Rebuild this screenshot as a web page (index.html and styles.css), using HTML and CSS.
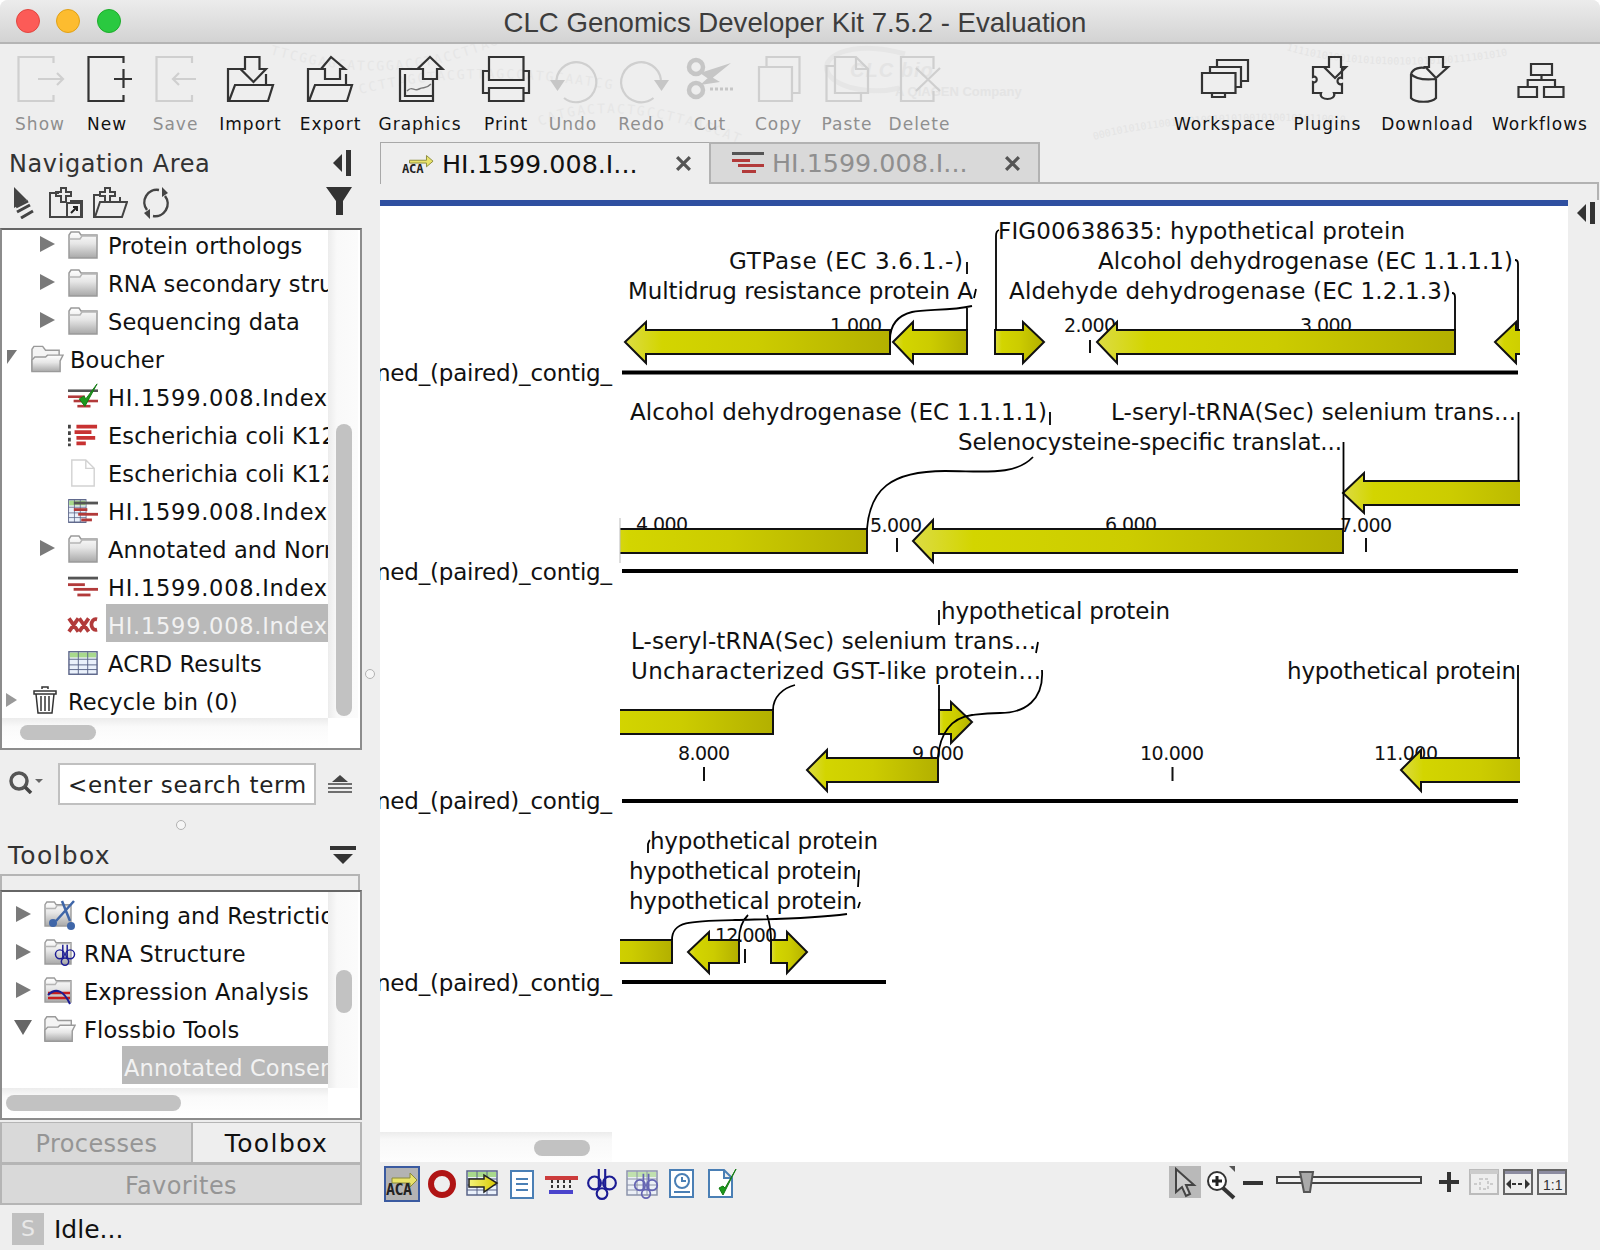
FILE: index.html
```html
<!DOCTYPE html>
<html lang="en">
<head>
<meta charset="utf-8">
<title>CLC Genomics Developer Kit 7.5.2 - Evaluation</title>
<link rel="stylesheet" href="styles.css">
</head>
<body>
<svg class="defs" aria-hidden="true">
  <defs>
    <linearGradient id="cds" x1="0" y1="0" x2="1" y2="0">
      <stop offset="0" stop-color="#dcdc44"/><stop offset=".14" stop-color="#d3d500"/><stop offset=".5" stop-color="#cccc00"/><stop offset="1" stop-color="#b3b000"/>
    </linearGradient>
    <linearGradient id="fold" x1="0" y1="0" x2="0" y2="1">
      <stop offset="0" stop-color="#ffffff"/><stop offset=".45" stop-color="#e6e6e6"/><stop offset="1" stop-color="#a8a8a8"/>
    </linearGradient>
    <linearGradient id="arr" x1="0" y1="0" x2="1" y2="0">
      <stop offset="0" stop-color="#f4f47a"/><stop offset="1" stop-color="#d9c800"/>
    </linearGradient>
    <symbol id="folder" viewBox="0 0 30 28">
      <path d="M1 27V4l2-3h8l2 3h16v23z" fill="url(#fold)" stroke="#9a9a9a" stroke-width="1.5"/>
      <path d="M1 8h11l2-3h15" fill="none" stroke="#b5b5b5" stroke-width="1.5"/>
    </symbol>
    <symbol id="folder-open" viewBox="0 0 34 28">
      <path d="M1 27V4l2-3h9l3 4h14v6" fill="#f4f4f4" stroke="#9a9a9a" stroke-width="1.5"/>
      <path d="M1 27V15l3-3h11l2-2h16l-3 6v11z" fill="url(#fold)" stroke="#9a9a9a" stroke-width="1.5"/>
    </symbol>
    <symbol id="red-lines" viewBox="0 0 32 24" preserveAspectRatio="none">
      <rect x="0" y="1" width="32" height="3" fill="#555"/>
      <rect x="0" y="8" width="18" height="3" fill="#b23a3a"/>
      <rect x="6" y="13" width="26" height="3" fill="#b23a3a"/>
      <rect x="10" y="19" width="14" height="3" fill="#b23a3a"/>
    </symbol>
    <symbol id="table" viewBox="0 0 32 26" preserveAspectRatio="none">
      <rect x="1" y="1" width="30" height="24" fill="#eaf1fb" stroke="#5a6488" stroke-width="1.5"/>
      <rect x="2" y="2" width="28" height="5" fill="#a8d98c"/>
      <path d="M1 9h30M1 15h30M1 20h30M11 1v24M21 1v24" stroke="#5a6488" stroke-width="1" fill="none"/>
    </symbol>
    <symbol id="rna" viewBox="0 0 30 30">
      <g fill="none" stroke="#1c1c94" stroke-width="2">
        <circle cx="8" cy="14" r="6"/><circle cx="22" cy="14" r="6"/><circle cx="15" cy="24" r="5"/>
        <path d="M12 1v18M18 1v18"/>
      </g>
    </symbol>
  </defs>
</svg>

<div class="window">
  <header class="titlebar">
    <div class="lights"><i class="light red"></i><i class="light amber"></i><i class="light green"></i></div>
    <h1 class="title">CLC Genomics Developer Kit 7.5.2 - Evaluation</h1>
  </header>

  <nav class="toolbar">
    <svg class="watermark" viewBox="0 0 1600 98" aria-hidden="true">
      <defs>
        <path id="wm1" d="M270 10 C 340 30, 420 40, 520 -10"/>
        <path id="wm2" d="M360 50 C 440 30, 520 30, 610 45"/>
        <path id="wm3" d="M540 82 C 590 60, 660 66, 740 100"/>
        <path id="wm4" d="M1286 6 C 1350 26, 1470 26, 1545 2"/>
        <path id="wm5" d="M1094 96 C 1180 72, 1330 70, 1480 94"/>
      </defs>
      <text class="wm-dna"><textPath href="#wm1">TTCGGAGCATCGGACGTACCTTAGGCTAACGGT</textPath></text>
      <text class="wm-dna"><textPath href="#wm2">CCTTAGCTACGTTAGCCATGCAATCGGATTC</textPath></text>
      <text class="wm-dna"><textPath href="#wm3">CATGACTACTGCCTTAAGCATCGA</textPath></text>
      <text class="wm-bin"><textPath href="#wm4">1111010100101010100101010100111101010</textPath></text>
      <text class="wm-bin"><textPath href="#wm5">000101010110010101001010100101001010110010</textPath></text>
      <path d="M905 10 C 850 -6, 815 14, 830 32 C 842 46, 875 50, 900 44" class="wm-swoosh"/>
      <text x="850" y="33" class="wm-logo">CLC bio</text>
      <text x="895" y="52" class="wm-sub">A QIAGEN Company</text>
    </svg>
    <div class="tool-group">
      <div class="tool off"><svg class="tool-ic" viewBox="0 0 48 48"><path d="M37.500 8V2H2.500V46H37.500V40M22 24H47M41 18l6 6-6 6"/></svg><span>Show</span></div>
      <div class="tool g7"><svg class="tool-ic" viewBox="0 0 48 48"><path d="M40.500 8V2H5.500V46H40.500V40M31 24H49M40.500 14V33"/></svg><span>New</span></div>
      <div class="tool off g8"><svg class="tool-ic" viewBox="0 0 48 48"><path d="M40 8V2H4.500V46H40V40M21 24H44M27 18l-6 6 6 6"/></svg><span>Save</span></div>
      <div class="tool g15"><svg class="tool-ic" viewBox="0 0 48 48"><path d="M13 14H1V46H41L46 30H8L2 46M39 19V30M18 2H32.500V14H39L26.500 27 13.500 14H18Z"/></svg><span>Import</span></div>
      <div class="tool g20"><svg class="tool-ic" viewBox="0 0 48 48"><path d="M13 14H1V46H40L45 30H8L2 46M39 19V30M24 2L38 14H33V24H18V14H14Z"/></svg><span>Export</span></div>
      <div class="tool g30"><svg class="tool-ic" viewBox="0 0 48 48"><path d="M21 14H4V46H37V25M9 19V41H37M34 2L46.500 14H41V24H27V14H21.500Z"/><path class="thin" d="M11 36c5-6 7 1 12-2s6 1 12-5"/></svg><span>Graphics</span></div>
      <div class="tool g26"><svg class="tool-ic" viewBox="0 0 48 48"><path d="M7 2H41.500V25H7ZM7 16H1V38H7M41.500 16H47V38H41.500M7 33H41.500V46H7Z"/></svg><span>Print</span></div>
      <div class="tool off g7"><svg class="tool-ic" viewBox="0 0 48 48"><path d="M7.400 25A20 20 0 1 1 15 43"/><path class="solid" d="M1 25H16L8.500 36Z"/></svg><span>Undo</span></div>
      <div class="tool off g8"><svg class="tool-ic" viewBox="0 0 48 48"><path d="M43 25A20 20 0 1 0 35.500 43"/><path class="solid" d="M36 25H51L43.500 36Z"/></svg><span>Redo</span></div>
      <div class="tool off g8"><svg class="tool-ic" viewBox="0 0 48 48"><circle class="heavy" cx="10" cy="12" r="7"/><circle class="heavy" cx="10" cy="35" r="7"/><path class="solid" d="M14 18L45 8 24 25ZM14 30L24 21 34 27Z"/><path class="dots" d="M24 34H48"/></svg><span>Cut</span></div>
      <div class="tool off g8"><svg class="tool-ic" viewBox="0 0 48 48"><path d="M4 12H37V46H4ZM11.500 12V2H44.500V38H37"/></svg><span>Copy</span></div>
      <div class="tool off g8"><svg class="tool-ic" viewBox="0 0 48 48"><path d="M12 11H3.500V46H38V38M12 38V2H33L45 14V38ZM33 2V14H45"/></svg><span>Paste</span></div>
      <div class="tool off g12"><svg class="tool-ic" viewBox="0 0 48 48"><path d="M37.500 14V2H5V46H37.500V36M20 13L44 36M44 13L20 36"/></svg><span>Delete</span></div>
    </div>
    <div class="tool-group tool-right">
      <div class="tool"><svg class="tool-ic" viewBox="0 0 48 48"><path d="M1 18H34.500V38H1ZM11 38V42H24V38M9 18V12H40V32H34.500M16 12V5H47V26H40"/></svg><span>Workspace</span></div>
      <div class="tool g40"><svg class="tool-ic" viewBox="0 0 48 48"><path d="M22 12H9V22c5-2 5 7 0 5V38H17c-3 8 16 8 13 0H38V29c-6 2-6-8 0-6V12H38"/><path d="M25 2H37V12H42L31 23 20 12H25Z"/></svg><span>Plugins</span></div>
      <div class="tool g52"><svg class="tool-ic" viewBox="0 0 48 48"><path d="M7 19V43c4 5 21 5 25 0V24M7 19c2-6 10-7 14-6M7 19c4 5 14 6 25 5"/><path d="M25 2H39V12H44L32 23 21.500 12H25Z"/></svg><span>Download</span></div>
      <div class="tool g42"><svg class="tool-ic" viewBox="0 0 48 48"><path d="M15 9H36V20H15ZM2.500 32H21V42H2.500ZM28 32H47.500V42H28ZM25.500 20V25M11.700 32V25H39V32"/></svg><span>Workflows</span></div>
    </div>
  </nav>

  <div class="workspace">
    <aside class="sidebar">
      <div class="pane-head nav-head">
        <span>Navigation Area</span>
        <svg class="head-ic" viewBox="0 0 20 26"><path d="M1 13L10 4V22Z" fill="#333"/><rect x="14" y="0" width="5" height="26" fill="#333"/></svg>
      </div>
      <div class="nav-icons">
        <svg class="nav-ic" viewBox="0 0 24 32"><path d="M2 0L15 13 2 21Z" fill="#444"/><path d="M4 20l12-6M5 25l13-7M9 31l12-7" stroke="#444" stroke-width="3" fill="none"/></svg>
        <svg class="nav-ic wide" viewBox="0 0 36 32"><path d="M11 6H2V30H34V14H22M8 5h5V1h5v4h5v4h-5v6h-5V9H8Z" fill="none" stroke="#444" stroke-width="2"/><rect x="19" y="16" width="14" height="14" fill="#eee" stroke="#444" stroke-width="2"/><path d="M23 26l6-6M25 20h4v4" stroke="#222" stroke-width="2" fill="none"/></svg>
        <svg class="nav-ic wide" viewBox="0 0 36 32"><path d="M8 8H2V30H30L35 15H8L3 30M28 10V15M8 5h5V1h5v4h5v4h-5v6h-5V9H8Z" fill="none" stroke="#444" stroke-width="2"/></svg>
        <svg class="nav-ic wide" viewBox="0 0 36 32"><path d="M9 23A12.500 12.500 0 0 1 21 3M27 9A12.500 12.500 0 0 1 15 29" fill="none" stroke="#444" stroke-width="2.500"/><path d="M24 0l6 6-6 4ZM12 32l-6-6 6-4Z" fill="#444"/></svg>
        <svg class="funnel" viewBox="0 0 26 28"><path d="M0 0H26L17 14V28H10V14Z" fill="#333"/></svg>
      </div>

      <div class="tree tree-nav">
        <div class="tree-view">
          <ul class="rows">
            <li class="row lv1"><i class="caret"></i><svg class="ri"><use href="#folder"/></svg><span>Protein orthologs</span></li>
            <li class="row lv1"><i class="caret"></i><svg class="ri"><use href="#folder"/></svg><span>RNA secondary structures</span></li>
            <li class="row lv1"><i class="caret"></i><svg class="ri"><use href="#folder"/></svg><span>Sequencing data</span></li>
            <li class="row lv0"><i class="caret diag"></i><svg class="ri ri-open"><use href="#folder-open"/></svg><span>Boucher</span></li>
            <li class="row lv1 leaf"><svg class="ri" viewBox="0 0 32 28"><use href="#red-lines" y="5" width="32" height="22"/><path d="M12 16l6 8L31 0 19 16l-2-3z" fill="#1c9a1c" stroke="#137a13"/></svg><span class="hi">HI.1599.008.IndexAndReads</span></li>
            <li class="row lv1 leaf"><svg class="ri" viewBox="0 0 32 26"><path d="M0 2h3v4H0zM0 9h3v4H0zM0 16h3v4H0zM0 22h3v3H0z" fill="#444"/><path d="M9 2h22v4H9zM7 8h18v4H7zM9 14h20v4H9zM9 20h10v4H9z" fill="#c83232"/></svg><span>Escherichia coli K12 substr.</span></li>
            <li class="row lv1 leaf"><svg class="ri" viewBox="0 0 32 30"><path d="M4 1H19L28 10V29H4ZM19 1V10H28" fill="#fff" stroke="#d2d2d2" stroke-width="1.500"/></svg><span>Escherichia coli K12 substr.</span></li>
            <li class="row lv1 leaf"><svg class="ri" viewBox="0 0 32 26"><use href="#table" width="20" height="26"/><use href="#red-lines" x="6" y="2" width="26" height="24"/></svg><span class="hi">HI.1599.008.IndexAndReads</span></li>
            <li class="row lv1"><i class="caret"></i><svg class="ri"><use href="#folder"/></svg><span>Annotated and Normalized</span></li>
            <li class="row lv1 leaf"><svg class="ri" viewBox="0 0 32 24"><use href="#red-lines" width="32" height="24"/></svg><span class="hi">HI.1599.008.IndexAndReads</span></li>
            <li class="row lv1 leaf sel"><svg class="ri" viewBox="0 0 32 24"><path d="M1 5l10 14M11 5L1 19M12 5l10 14M22 5L12 19M31 6c-8-2-8 13 0 11" fill="none" stroke="#b23a3a" stroke-width="4"/></svg><span class="hi">HI.1599.008.IndexAndReads</span></li>
            <li class="row lv1 leaf"><svg class="ri" viewBox="0 0 32 26"><use href="#table" width="32" height="26"/></svg><span>ACRD Results</span></li>
            <li class="row lv0"><i class="caret tiny"></i><svg class="ri ri-bin" viewBox="0 0 24 28"><path d="M9 3V1h6v2M1 5h22v3H1zM3 8l2 19h14l2-19" fill="#fff" stroke="#333" stroke-width="1.500"/><path d="M8 10v15M12 10v15M16 10v15" stroke="#333" stroke-width="1.500"/></svg><span>Recycle bin (0)</span></li>
          </ul>
        </div>
        <div class="vtrack"><i class="thumb v-nav"></i></div>
        <div class="htrack"><i class="thumb h-nav"></i></div>
        <div class="corner"></div>
      </div>

      <div class="search">
        <svg class="search-ic" viewBox="0 0 36 23"><circle cx="11" cy="10" r="8" fill="none" stroke="#555" stroke-width="3.500"/><path d="M17 16l6 6" stroke="#444" stroke-width="3.500"/><path d="M27 8h8l-4 4z" fill="#666"/></svg>
        <div class="search-box">&lt;enter search term</div>
        <svg class="eject" viewBox="0 0 24 18"><path d="M4 7L12 0 20 7Z" fill="#444"/><path d="M0 9H24M0 13H24M0 17H24" stroke="#444" stroke-width="1.500"/></svg>
      </div>
      <div class="pane-head tool-head">
        <span>Toolbox</span>
        <svg class="menu-ic" viewBox="0 0 26 18"><rect width="26" height="4" fill="#333"/><path d="M3 8H23L13 18Z" fill="#333"/></svg>
      </div>
      <div class="strip"></div>
      <div class="tree tree-tools">
        <div class="tree-view">
          <ul class="rows">
            <li class="row lvt"><i class="caret"></i><svg class="ri" viewBox="0 0 32 32"><use href="#folder" y="2" width="28" height="26"/><path d="M30 2L12 22M18 2l8 20" stroke="#3f66a8" stroke-width="2.500" fill="none"/><circle cx="9" cy="24" r="4" fill="#3f66a8"/><circle cx="27" cy="27" r="4" fill="#3f66a8"/></svg><span>Cloning and Restriction Sites</span></li>
            <li class="row lvt"><i class="caret"></i><svg class="ri" viewBox="0 0 32 32"><use href="#folder" y="2" width="28" height="26"/><use href="#rna" x="10" y="6" width="22" height="24"/></svg><span>RNA Structure</span></li>
            <li class="row lvt"><i class="caret"></i><svg class="ri" viewBox="0 0 32 32"><use href="#folder" y="2" width="28" height="26"/><path d="M4 18H26" stroke="#c81e1e" stroke-width="2.500"/><path d="M4 23H26" stroke="#c81e1e" stroke-width="2.500"/><path d="M4 20c8-8 16-4 22 9" stroke="#1c1c94" stroke-width="2" fill="none"/></svg><span>Expression Analysis</span></li>
            <li class="row lvt"><i class="caret down"></i><svg class="ri" viewBox="0 0 32 28"><use href="#folder-open" width="32" height="28"/></svg><span>Flossbio Tools</span></li>
            <li class="row lvs sel"><span>Annotated Consensus Read Mapper</span></li>
          </ul>
        </div>
        <div class="vtrack"><i class="thumb v-tools"></i></div>
        <div class="htrack"><i class="thumb h-tools"></i></div>
        <div class="corner"></div>
      </div>
      <div class="pane-tabs">
        <div class="ptab">Processes</div>
        <div class="ptab on">Toolbox</div>
        <div class="ptab full">Favorites</div>
      </div>
      <div class="status"><b class="status-s">S</b><span>Idle...</span></div>
      <i class="grip grip-v"></i>
      <i class="grip grip-h"></i>
    </aside>

    <main class="main">
      <div class="tabs">
        <div class="tab active">
          <svg class="tab-ic" viewBox="0 0 34 22"><path d="M8 7H26V2L33 8 26 14V10H8Z" fill="#e9e36a" stroke="#8a8a3a"/><text x="0" y="21" class="aca">ACA</text></svg>
          <span class="tab-t">HI.1599.008.I...</span>
          <svg class="tab-x" viewBox="0 0 16 14"><path d="M2 1L14 13M14 1L2 13"/></svg>
        </div>
        <div class="tab">
          <svg class="tab-ic" viewBox="0 0 32 24"><use href="#red-lines" width="32" height="24"/></svg>
          <span class="tab-t">HI.1599.008.I...</span>
          <svg class="tab-x" viewBox="0 0 16 14"><path d="M2 1L14 13M14 1L2 13"/></svg>
        </div>
        <div class="tab-rest"></div>
      </div>
      <div class="view-row">
        <div class="view">
          <svg class="map" viewBox="380 206 1188 956" role="img">
            <defs><clipPath id="clipRow"><rect x="620" y="206" width="900" height="956"/></clipPath></defs>

            <!-- sequence names -->
            <text class="lbl" x="376" y="381" textLength="236">ned_(paired)_contig_</text>
            <text class="lbl" x="376" y="580" textLength="236">ned_(paired)_contig_</text>
            <text class="lbl" x="376" y="809" textLength="236">ned_(paired)_contig_</text>
            <text class="lbl" x="376" y="991" textLength="236">ned_(paired)_contig_</text>

            <!-- rulers -->
            <path class="rule" d="M622 372.500H1518M622 571H1518M622 801H1518M622 982H886"/>
            <text class="num" x="830" y="332" textLength="52">1.000</text>
            <text class="num" x="1064" y="332" textLength="52">2.000</text>
            <text class="num" x="1300" y="332" textLength="52">3.000</text>
            <text class="num" x="636" y="531" textLength="52">4.000</text>
            <text class="num" x="870" y="532" textLength="52">5.000</text>
            <text class="num" x="1105" y="531" textLength="52">6.000</text>
            <text class="num" x="1340" y="532" textLength="52">7.000</text>
            <text class="num" x="678" y="760" textLength="52">8.000</text>
            <text class="num" x="912" y="760" textLength="52">9.000</text>
            <text class="num" x="1140" y="760" textLength="64">10.000</text>
            <text class="num" x="1374" y="760" textLength="64">11.000</text>
            <text class="num" x="715" y="942" textLength="62">12.000</text>
            <path class="tick" d="M1090 340V353M897 538V552M1366 538V552M704 767V781M1172.500 767V781M745 949V963"/>

            <!-- features -->
            <g clip-path="url(#clipRow)">
              <polygon class="cds" points="625,342 646,322 646,330 890,330 890,354 646,354 646,363"/>
              <polygon class="cds" points="893,342 913,322 913,330 967,330 967,354 913,354 913,363"/>
              <polygon class="cds" points="995,330 1023,330 1023,322 1044,342 1023,363 1023,354 995,354"/>
              <polygon class="cds" points="1097,342 1117,322 1117,330 1455,330 1455,354 1117,354 1117,363"/>
              <polygon class="cds" points="1495,342 1516,322 1516,330 1560,330 1560,354 1516,354 1516,363"/>
              <polygon class="cds" points="1343,493 1364,473 1364,481 1560,481 1560,505 1364,505 1364,513"/>
              <polygon class="cds" points="590,529 867,529 867,553 590,553"/>
              <polygon class="cds" points="913,541 933,520 933,529 1343,529 1343,553 933,553 933,562"/>
              <polygon class="cds" points="590,710 773,710 773,734 590,734"/>
              <polygon class="cds" points="939,710 951,710 951,702 972,722 951,743 951,734 939,734"/>
              <polygon class="cds" points="807,770 827,750 827,758 938,758 938,782 827,782 827,791"/>
              <polygon class="cds" points="1401,770 1421,750 1421,758 1560,758 1560,782 1421,782 1421,791"/>
              <polygon class="cds" points="590,940 672,940 672,963 590,963"/>
              <polygon class="cds" points="688,952 709,932 709,940 739,940 739,963 709,963 709,973"/>
              <polygon class="cds" points="771,940 787,940 787,932 807,952 787,973 787,963 771,963"/>
            </g>
            <path class="clipedge" d="M620 518V563"/>

            <!-- leader lines -->
            <path class="lead" d="M967 262V274M967 307V330M972 306C950 311 925 309 912 312C896 316 890 326 890 340M976 289L974 298"/>
            <path class="lead" d="M996 330V236Q996 231 999 230M1455 330V297Q1455 293 1452 293M1518 330V264Q1518 260 1515 260"/>
            <path class="lead" d="M1050 412V425M1518.500 481V412M1343.500 529V442M1033 457C1015 476 985 471 945 471C890 471 870 490 867 529"/>
            <path class="lead" d="M939 610V625M1038 642L1036 653M939 685V710M795 685C783 688 773 697 773 710M1042 670C1044 700 1025 713 1000 713C985 713 980 714 972 715C950 718 940 735 938 757M1518 665V758"/>
            <path class="lead" d="M648 853V844Q649 841 650 840M859 870L858 887M860 902L858 908M847 914C810 919 770 919 735 920C690 921 672 921 672 940M748 915C742 921 739 930 739 940M767 915C769 921 771 930 771 940"/>

            <!-- labels -->
            <text class="lbl" x="998" y="239" textLength="407">FIG00638635: hypothetical protein</text>
            <text class="lbl" x="729" y="269" textLength="234">GTPase (EC 3.6.1.-)</text>
            <text class="lbl" x="1098" y="269" textLength="415">Alcohol dehydrogenase (EC 1.1.1.1)</text>
            <text class="lbl" x="628" y="299" textLength="345">Multidrug resistance protein A</text>
            <text class="lbl" x="1009" y="299" textLength="442">Aldehyde dehydrogenase (EC 1.2.1.3)</text>

            <text class="lbl" x="630" y="420" textLength="417">Alcohol dehydrogenase (EC 1.1.1.1)</text>
            <text class="lbl" x="1111" y="420" textLength="405">L-seryl-tRNA(Sec) selenium trans...</text>
            <text class="lbl" x="958" y="450" textLength="384">Selenocysteine-specific translat...</text>

            <text class="lbl" x="941" y="619" textLength="229">hypothetical protein</text>
            <text class="lbl" x="631" y="649" textLength="405">L-seryl-tRNA(Sec) selenium trans...</text>
            <text class="lbl" x="631" y="679" textLength="410">Uncharacterized GST-like protein...</text>
            <text class="lbl" x="1287" y="679" textLength="229">hypothetical protein</text>

            <text class="lbl" x="650" y="849" textLength="228">hypothetical protein</text>
            <text class="lbl" x="629" y="879" textLength="228">hypothetical protein</text>
            <text class="lbl" x="629" y="909" textLength="228">hypothetical protein</text>
          </svg>
          <div class="map-scroll"><i class="thumb h-map"></i></div>
        </div>
        <div class="view-side">
          <svg class="side-ic" viewBox="0 0 18 22"><path d="M0 11L9 2V20Z" fill="#333"/><rect x="13" y="0" width="5" height="22" fill="#333"/></svg>
        </div>
      </div>
      <div class="bottom">
        <div class="views">
          <svg class="vi vi-on" viewBox="0 0 40 40"><rect x="3" y="3" width="34" height="34" fill="#b3b3b3" stroke="#3a5aa0" stroke-width="2"/><path d="M10 14H28V9L35 16 28 23V19H10Z" fill="#e9e36a" stroke="#8a8a3a"/><text x="4" y="31" class="aca big">ACA</text></svg>
          <svg class="vi" viewBox="0 0 40 40"><circle cx="20" cy="20" r="11" fill="none" stroke="#b01414" stroke-width="6"/></svg>
          <svg class="vi" viewBox="0 0 40 40"><use href="#table" x="4" y="6" width="32" height="26"/><path d="M7 15H22V11L35 19 22 28V23H7Z" fill="url(#arr)" stroke="#222" stroke-width="1.500"/></svg>
          <svg class="vi" viewBox="0 0 40 40"><rect x="9" y="7" width="22" height="27" fill="#fff" stroke="#4a7fb5" stroke-width="2"/><path d="M14 15H26M14 20H26M14 26H26" stroke="#4a7fb5" stroke-width="2"/></svg>
          <svg class="vi" viewBox="0 0 40 40"><rect x="3" y="12" width="33" height="4" fill="#cc3b3b"/><rect x="7" y="26" width="24" height="4" fill="#4a44cc"/><path d="M10 16v10M16 16v10M22 16v10M28 16v10" stroke="#333" stroke-width="2" stroke-dasharray="3 2"/></svg>
          <svg class="vi" viewBox="0 0 40 40"><use href="#rna" x="4" y="4" width="32" height="32"/></svg>
          <svg class="vi vi-fade" viewBox="0 0 40 40"><use href="#table" x="4" y="6" width="32" height="26"/><use href="#rna" x="11" y="8" width="26" height="28"/></svg>
          <svg class="vi" viewBox="0 0 40 40"><rect x="8" y="6" width="23" height="27" fill="#fff" stroke="#4a7fb5" stroke-width="2"/><circle cx="20" cy="17" r="7" fill="none" stroke="#4a7fb5" stroke-width="2"/><path d="M20 13v4h4M12 28H28" stroke="#4a7fb5" stroke-width="2" fill="none"/></svg>
          <svg class="vi" viewBox="0 0 40 40"><path d="M7 6H22L30 14V33H7ZM22 6V14H30" fill="#fff" stroke="#4a7fb5" stroke-width="2"/><path d="M17 24l4 7L34 5 23 24l-2-2z" fill="#1c9a1c" stroke="#137a13"/></svg>
        </div>
        <div class="zooms">
          <svg class="zi pointer" viewBox="0 0 32 32"><path d="M7 3V26L13 21 17 30 21 28 17 19H25Z" fill="#ccc" stroke="#444" stroke-width="2"/></svg>
          <svg class="zi zoom-ic" viewBox="0 0 34 32"><circle cx="14" cy="15" r="9" fill="#fff" stroke="#333" stroke-width="2"/><path d="M9 15H19M14 10V20" stroke="#222" stroke-width="3"/><path d="M20 22L31 32" stroke="#333" stroke-width="4"/><path d="M26 0H32V6Z" fill="#555"/></svg>
          <svg class="zi minus" viewBox="0 0 24 32"><rect x="2" y="15" width="20" height="4" fill="#333"/></svg>
          <svg class="zi slider" viewBox="0 0 152 32"><rect x="4" y="11" width="144" height="6" fill="#f2f2f2" stroke="#444" stroke-width="2"/><path d="M27 6H40L37 26H31Z" fill="#aaa" stroke="#555" stroke-width="2"/></svg>
          <svg class="zi plus" viewBox="0 0 24 32"><path d="M2 16H22M12 6V26" stroke="#333" stroke-width="4"/></svg>
          <svg class="zi box off" viewBox="0 0 32 32"><rect x="2" y="4" width="28" height="24" fill="#eee" stroke="#bbb" stroke-width="2"/><rect x="2" y="4" width="28" height="4" fill="#ccc"/><path d="M6 18H10M22 18H26M12 13H20V23H12Z" stroke="#ccc" stroke-width="2" fill="none" stroke-dasharray="3 2"/></svg>
          <svg class="zi box" viewBox="0 0 32 32"><rect x="2" y="4" width="28" height="24" fill="#eee" stroke="#666" stroke-width="2"/><rect x="3" y="5" width="26" height="3" fill="#8c8ca0"/><path d="M4 18L9 13V23ZM28 18L23 13V23Z" fill="#333"/><path d="M10 18H22" stroke="#333" stroke-width="2" stroke-dasharray="4 2"/></svg>
          <svg class="zi box" viewBox="0 0 32 32"><rect x="2" y="4" width="28" height="24" fill="#eee" stroke="#666" stroke-width="2"/><rect x="3" y="5" width="26" height="3" fill="#8c8ca0"/><text x="7" y="24" class="ratio">1:1</text></svg>
        </div>
      </div>
    </main>
  </div>
</div>
</body>
</html>
```

FILE: styles.css
```css
* { box-sizing: border-box; }
html, body { margin: 0; padding: 0; background: #fff; }
body { font-family: "DejaVu Sans", sans-serif; color: #111; }
.defs { position: absolute; width: 0; height: 0; }
ul { list-style: none; margin: 0; padding: 0; }

.window {
  width: 1600px; height: 1250px; background: #eeeeee;
  display: flex; flex-direction: column; overflow: hidden;
  border-radius: 8px 8px 0 0;
}

/* title bar */
.titlebar {
  height: 44px; flex: none; display: flex; align-items: center; position: relative;
  background: linear-gradient(#ececec, #d3d3d3);
  border-bottom: 2px solid #b4b4b4;
}
.lights { display: flex; gap: 16.5px; padding-left: 15.5px; }
.light { width: 24px; height: 24px; border-radius: 50%; display: block; }
.red { background: #fc5b57; border: 1px solid #e2463f; }
.amber { background: #fdbc2f; border: 1px solid #e1a116; }
.green { background: #2ac940; border: 1px solid #1dad2b; }
.title {
  position: absolute; left: 0; right: 10px; top: 1px; margin: 0; text-align: center;
  font: 400 27.6px/44px "Liberation Sans", sans-serif; color: #3d3d3d;
}

/* main toolbar */
.toolbar { height: 98px; flex: none; display: flex; justify-content: space-between; position: relative; padding: 11px 30px 0 10px; }
.watermark { position: absolute; left: 0; top: 0; width: 1600px; height: 98px; }
.wm-dna { font: 13px "DejaVu Sans Mono", monospace; fill: #e6e6e6; letter-spacing: 2px; }
.wm-bin { font: 10px "DejaVu Sans Mono", monospace; fill: #e4e4e4; letter-spacing: 0; }
.wm-swoosh { fill: none; stroke: #e6e6e6; stroke-width: 5; }
.wm-logo { font: italic 700 20px "Liberation Sans", sans-serif; fill: #e4e4e4; letter-spacing: 1px; }
.wm-sub { font: 700 13px "Liberation Sans", sans-serif; fill: #e4e4e4; }
.tool-group { display: flex; position: relative; }
.tool { width: 60px; display: flex; flex-direction: column; align-items: center; font-size: 17px; letter-spacing: 1px; line-height: 24px; color: #111; white-space: nowrap; }
.tool span { margin-top: 9px; flex: none; }
.tool-ic { width: 48px; height: 48px; flex: none; overflow: visible; fill: none; stroke: #333; stroke-width: 2.2; }
.tool-ic .thin { stroke: #777; stroke-width: 1.500; }
.off { color: #8f8f8f; }
.tool.off .tool-ic { stroke: #cfcfcf; }
.tool.off .solid { fill: #c6c6c6; stroke: none; }
.tool.off .heavy { stroke: #c6c6c6; stroke-width: 4.500; }
.tool.off .dots { stroke: #c6c6c6; stroke-width: 3; stroke-dasharray: 3 2; }
.g7 { margin-left: 7px; }
.g8 { margin-left: 8.5px; }
.g12 { margin-left: 12.5px; }
.g15 { margin-left: 15px; }
.g20 { margin-left: 20px; }
.g26 { margin-left: 26px; }
.g30 { margin-left: 29.5px; }
.g40 { margin-left: 42.5px; }
.g42 { margin-left: 52.5px; }
.g52 { margin-left: 40px; }

/* layout */
.workspace { flex: 1; display: flex; min-height: 0; }
.sidebar { width: 380px; flex: none; position: relative; padding-right: 18px; }
.main { flex: 1; display: flex; flex-direction: column; min-width: 0; }

/* sidebar heads */
.pane-head { display: flex; align-items: center; justify-content: space-between; font-size: 24px; letter-spacing: .6px; color: #333; white-space: nowrap; }
.nav-head { height: 42px; padding: 2px 10px 0 9px; }
.head-ic { width: 20px; height: 26px; margin-top: -2px; }
.nav-icons { height: 44px; display: flex; align-items: flex-start; padding: 3px 10px 0 12px; gap: 8px; }
.nav-ic { width: 24px; height: 32px; flex: none; }
.nav-ic:first-child { margin-right: 4px; }
.nav-ic:nth-child(4) { margin-left: 2px; }
.nav-ic.wide { width: 36px; }
.funnel { width: 26px; height: 28px; margin-left: auto; }

/* trees */
.tree {
  display: grid; grid-template-columns: 326px 1fr; grid-template-rows: 1fr 30px;
  background: #fff; border: 2px solid #8c8c8c; overflow: hidden;
}
.tree-nav { height: 522px; border-top-color: #666; }
.tree-tools { height: 230px; border-top-color: #666; }
.tree-view { overflow: hidden; min-height: 0; }
.tree-nav .rows { margin-top: -6px; }
.tree-tools .rows { margin-top: 2px; }
.row { height: 38px; display: flex; align-items: center; white-space: nowrap; font-size: 22.5px; letter-spacing: .15px; color: #111; }
.row span { padding-top: 5px; }
.row .hi { letter-spacing: .75px; }
.lv1 { padding-left: 38px; }
.lv1.leaf { padding-left: 66px; }
.lv0 { padding-left: 2px; }
.lvt { padding-left: 14px; }
.lvs { padding-left: 120px; }
.caret { display: block; flex: none; width: 0; height: 0; border-style: solid; border-width: 8px 0 8px 15px; border-color: transparent transparent transparent #7a7a7a; margin-right: 13px; margin-top: 1px; }
.caret.diag { border-width: 14px 10px 0 0; border-color: #777 transparent transparent transparent; margin: 0 14px 0 3px; }
.caret.tiny { border-width: 7px 0 7px 11px; border-color: transparent transparent transparent #999; margin-right: 13px; margin-left: 2px; }
.caret.down { border-width: 15px 9px 0 9px; border-color: #666 transparent transparent transparent; margin: 0 12px 0 -2px; }
.ri { width: 30px; height: 28px; flex: none; margin-right: 10px; margin-top: 3px; overflow: visible; }
.ri-open { width: 33px; margin-right: 6px; }
.lv0 .ri-bin { width: 24px; margin-left: 3px; margin-right: 11px; margin-top: 2px; }
.lvt .ri { width: 32px; height: 32px; margin-right: 8px; }
.row.sel { color: #f2f2f2; }
.row.sel span { background: #b9b9b9; height: 38px; line-height: 34px; padding: 5px 0 0 2px; flex: 1; min-width: 0; }
.lv1.sel .ri { margin-right: 8px; }
.vtrack { background: linear-gradient(90deg, #ececec, #f9f9f9 30%, #fbfbfb); position: relative; margin-right: 2px; }
.htrack { background: linear-gradient(#ececec, #fafafa 30%, #fff); position: relative; }
.corner { background: #fff; }
.thumb { display: block; position: absolute; background: #c2c2c2; border-radius: 8px; }
.v-nav { left: 8px; width: 16px; top: 194px; height: 292px; }
.h-nav { left: 18px; top: 7px; width: 76px; height: 15px; }
.v-tools { left: 8px; width: 16px; top: 78px; height: 43px; }
.h-tools { left: 4px; top: 7px; width: 175px; height: 16px; }

/* search */
.search { height: 66px; display: flex; align-items: flex-start; padding: 13px 10px 0 8px; }
.search-ic { width: 36px; height: 23px; margin-top: 8px; flex: none; }
.search-box { width: 258px; height: 42px; margin-left: 14px; border: 2px solid #c0c0c0; background: #fff; font-size: 23px; letter-spacing: .7px; line-height: 40px; padding-left: 8px; color: #222; white-space: nowrap; overflow: hidden; flex: none; }
.eject { width: 24px; height: 18px; margin: 12px 0 0 12px; flex: none; }
.tool-head { height: 58px; padding: 21px 6px 0 8px; font-size: 25px; letter-spacing: 1.3px; }
.menu-ic { width: 26px; height: 18px; margin-top: -2px; }
.strip { height: 16px; border: 2px solid #b5b5b5; border-bottom: 0; margin-right: 2px; }

/* bottom left tabs */
.pane-tabs { display: grid; grid-template-columns: 193px 1fr; margin-top: 2px; }
.ptab { height: 42px; background: #d9d9d9; border: 2px solid #b5b5b5; border-top-width: 1px; color: #959595; font-size: 24px; line-height: 42px; text-align: center; letter-spacing: .4px; }
.ptab.on { background: #eeeeee; color: #111; border-left: 0; font-size: 25px; letter-spacing: 1.4px; }
.ptab.full { grid-column: 1 / 3; height: 41px; }
.status { height: 46px; display: flex; align-items: center; padding: 2px 0 0 12px; font-size: 25px; color: #111; }
.status-s { width: 32px; height: 32px; background: #c0c0c0; color: #e8e8e8; text-align: center; font-weight: 400; font-size: 22px; line-height: 32px; margin-right: 10px; }
.grip { position: absolute; width: 10px; height: 10px; border-radius: 50%; background: #f6f6f6; border: 1px solid #b2b2b2; }
.grip-v { left: 365px; top: 527px; }
.grip-h { left: 176px; top: 678px; }

/* tabs */
.tabs { height: 42px; flex: none; display: flex; align-items: stretch; }
.tab { width: 331px; flex: none; display: flex; align-items: center; background: #d9d9d9; border: 2px solid #b2b2b2; color: #8f8f8f; font-size: 25.4px; padding-left: 21px; position: relative; }
.tab + .tab { margin-left: -2px; }
.tab.active { background: #eeeeee; color: #111; border-width: 1px 0 0 1px; border-color: #a8a8a8; }
.tab-ic { width: 32px; height: 24px; flex: none; margin-right: 8px; }
.tab-t { flex: 1; white-space: nowrap; }
.tab-x { width: 17px; height: 15px; flex: none; margin-right: 17px; fill: none; stroke: #555; stroke-width: 3; }
.tab.active .tab-x { margin-right: 19px; }
.tab-rest { flex: 1; border-bottom: 2px solid #b2b2b2; margin-right: 1px; }
.aca { font: 700 13px "DejaVu Sans Mono", monospace; fill: #222; letter-spacing: -.3px; }
.aca.big { font-size: 15px; letter-spacing: -.5px; }
.ratio { font: 400 14px "Liberation Sans", sans-serif; fill: #333; }

/* viewer */
.view-row { height: 978px; padding-top: 16px; display: flex; flex: none; }
.view { width: 1188px; flex: none; border-top: 6px solid #2f4fa0; background: #fff; position: relative; }
.map { display: block; width: 1188px; height: 956px; }
.map-scroll { position: absolute; left: 0; bottom: 0; width: 232px; height: 30px; background: linear-gradient(#ececec, #f8f8f8 25%, #fdfdfd); }
.h-map { left: 154px; top: 8px; width: 56px; height: 16px; }
.view-side { flex: 1; padding: 2px 0 0 9px; position: relative; }
.view-side::after { content: ""; position: absolute; right: 1px; top: -16px; width: 2px; height: 16px; background: #b2b2b2; }
.side-ic { width: 18px; height: 22px; display: block; }
.lbl { font: 400 23px "DejaVu Sans", sans-serif; fill: #111; }
.num { font: 400 19px "DejaVu Sans", sans-serif; fill: #111; }
.rule { stroke: #000; stroke-width: 4; fill: none; }
.tick { stroke: #111; stroke-width: 2; fill: none; }
.cds { fill: url(#cds); stroke: #111; stroke-width: 2; }
.lead { fill: none; stroke: #000; stroke-width: 1.800; }
.clipedge { stroke: #bbb; stroke-width: 1; }

/* bottom bar */
.bottom { flex: 1; display: flex; justify-content: space-between; align-items: flex-start; padding: 2px 32px 0 2px; }
.views { display: flex; }
.vi { width: 40px; height: 40px; flex: none; }
.vi-fade { opacity: .65; }
.zooms { display: flex; align-items: flex-start; margin-top: 2px; }
.zi { height: 32px; flex: none; overflow: visible; }
.pointer { width: 32px; background: #b9b9b9; }
.zoom-ic { width: 34px; margin-left: 2px; }
.minus { width: 24px; margin-left: 4px; }
.slider { width: 152px; margin-left: 8px; }
.plus { width: 24px; margin-left: 12px; }
.box { width: 32px; margin-left: 2px; }
.box.off { margin-left: 7px; }
```
